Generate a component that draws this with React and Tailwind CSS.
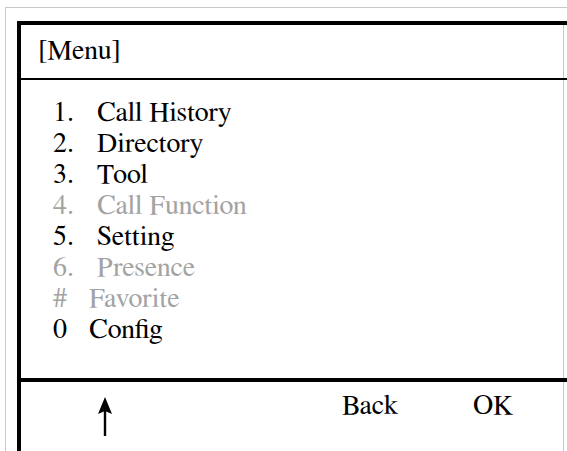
import React from "react";

const items = [
  { n: "1.", t: "Call History", on: true, w: "w-[44px]" },
  { n: "2.", t: "Directory", on: true, w: "w-[44px]" },
  { n: "3.", t: "Tool", on: true, w: "w-[44px]" },
  { n: "4.", t: "Call Function", on: false, w: "w-[44px]" },
  { n: "5.", t: "Setting", on: true, w: "w-[44px]" },
  { n: "6.", t: "Presence", on: false, w: "w-[44px]" },
  { n: "#", t: "Favorite", on: false, w: "w-[36px]" },
  { n: "0", t: "Config", on: true, w: "w-[36px]" },
];

export default function App() {
  return (
    <div className="w-[567px] h-[451px] overflow-hidden bg-white text-black font-['FreeSerif']">
      <div className="ml-[5px] mt-[7px] w-[600px] h-[500px] border-t border-l border-[#c8c8c8] pl-[11px] pt-[13px]">
        <div className="w-[580px] h-[480px] border-t-4 border-l-4 border-black">
          <div className="w-[543px] h-[53px] border-r border-[#c8c8c8] flex items-center pl-[17px] text-[28px] leading-[31px]">
            [Menu]
          </div>
          <div className="h-[2px] bg-black" />
          <div className="w-[543px] h-[298px] border-r border-[#c8c8c8] pl-[32px] pt-[18px] text-[28px] leading-[31px]">
            {items.map((it) => (
              <div
                key={it.n}
                className={it.on ? "flex text-black" : "flex text-[#a3a3a3]"}
              >
                <span className={it.w}>{it.n}</span>
                <span>{it.t}</span>
              </div>
            ))}
          </div>
          <div className="h-[4px] bg-black" />
          <div className="w-[543px] h-[80px] border-r border-[#c8c8c8] flex items-start text-[28px] leading-[31px]">
            <svg
              className="ml-[76px] mt-[15px]"
              width="16"
              height="40"
              viewBox="0 0 16 40"
            >
              <path d="M8 0 L15 17 L8 14 L1 17 Z" fill="#000" />
              <rect x="6.8" y="12" width="2.4" height="27" fill="#000" />
            </svg>
            <span className="ml-[229px] mt-[9px] w-[131px]">Back</span>
            <span className="mt-[9px]">OK</span>
          </div>
        </div>
      </div>
    </div>
  );
}
